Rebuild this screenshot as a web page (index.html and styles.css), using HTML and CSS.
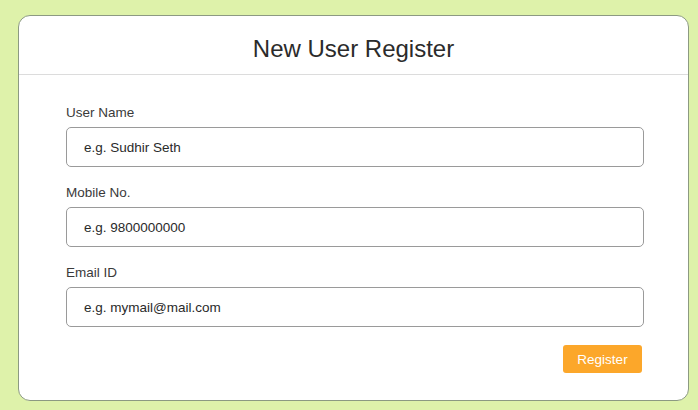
FILE: index.html
```html
<!DOCTYPE html>
<html>
<head>
<meta charset="utf-8">
<link rel="stylesheet" href="styles.css">
</head>
<body>
<div class="card">
  <div class="card-header"><h1 class="title">New User Register</h1></div>
  <form class="form">
    <label class="label">User Name</label>
    <input class="input" type="text" placeholder="e.g. Sudhir Seth">
    <label class="label">Mobile No.</label>
    <input class="input" type="text" placeholder="e.g. 9800000000">
    <label class="label">Email ID</label>
    <input class="input" type="text" placeholder="e.g. mymail@mail.com">
    <div class="actions"><button class="btn" type="button">Register</button></div>
  </form>
</div>
</body>
</html>
```
FILE: styles.css
```css
html, body { margin: 0; padding: 0; }
body {
  background: #def2aa;
  font-family: "Liberation Sans", Arial, sans-serif;
  padding: 15px 0 0 18px;
  height: 410px;
  box-sizing: border-box;
  overflow: hidden;
}
.card {
  width: 671px;
  height: 386px;
  box-sizing: border-box;
  background: #fff;
  border: 1px solid #8c9a82;
  border-radius: 12px;
}
.card-header {
  height: 59px;
  box-sizing: border-box;
  border-bottom: 1px solid #dcdcdc;
  display: flex;
  align-items: center;
  justify-content: center;
}
.title {
  margin: 0;
  font-weight: normal;
  font-size: 24px;
  color: #2b2b2b;
  padding-top: 8px;
}
.form {
  display: flex;
  flex-direction: column;
  padding: 29px 44px 0 47px;
}
.label {
  font-size: 13.5px;
  line-height: 18px;
  color: #3a3a3a;
  margin-bottom: 5px;
}
.input {
  height: 40px;
  box-sizing: border-box;
  border: 1px solid #9a9a9a;
  border-radius: 5px;
  padding: 0 17px;
  font-family: inherit;
  font-size: 13.5px;
  color: #2a2a2a;
  margin: 0 0 17px 0;
  outline: none;
}
.input::placeholder { color: #2a2a2a; opacity: 1; }
.actions {
  display: flex;
  justify-content: flex-end;
  margin-top: 1px;
  padding-right: 2px;
}
.btn {
  width: 79px;
  height: 28px;
  background: #fca72a;
  border: none;
  border-radius: 3px;
  color: #fff;
  font-family: inherit;
  font-size: 13.5px;
}
```
